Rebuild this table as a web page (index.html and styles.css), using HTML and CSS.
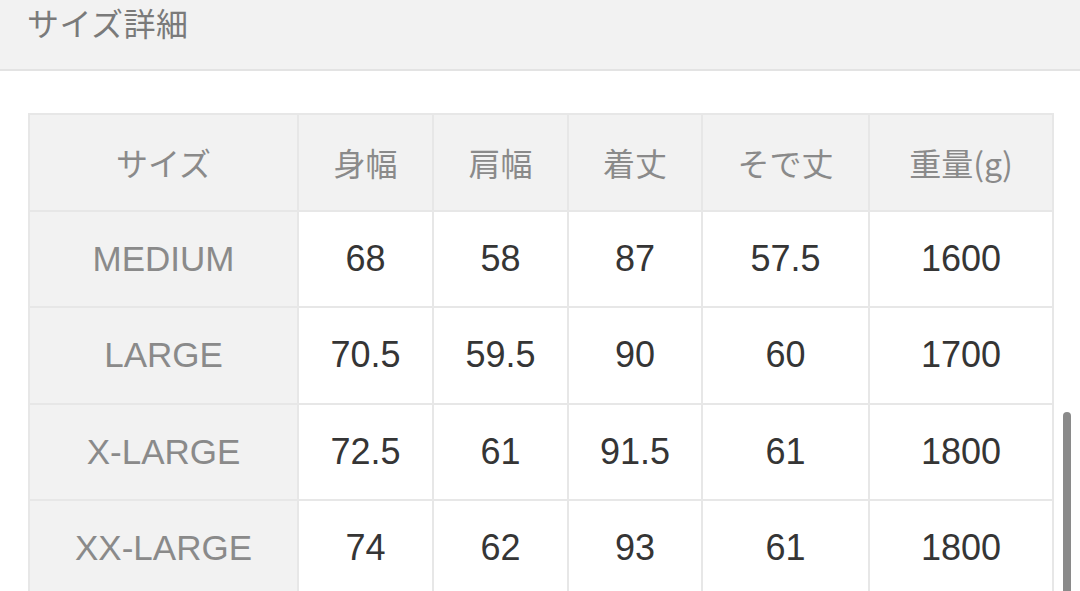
FILE: index.html
```html
<!DOCTYPE html>
<html lang="ja">
<head>
<meta charset="utf-8">
<link rel="stylesheet" href="styles.css">
</head>
<body>
<header class="bar"><h1 class="title">サイズ詳細</h1></header>
<main class="content">
<table class="size-table">
<colgroup>
<col class="c1"><col class="c2"><col class="c3"><col class="c4"><col class="c5"><col class="c6">
</colgroup>
<thead>
<tr><th>サイズ</th><th>身幅</th><th>肩幅</th><th>着丈</th><th>そで丈</th><th>重量(g)</th></tr>
</thead>
<tbody>
<tr><th>MEDIUM</th><td>68</td><td>58</td><td>87</td><td>57.5</td><td>1600</td></tr>
<tr><th>LARGE</th><td>70.5</td><td>59.5</td><td>90</td><td>60</td><td>1700</td></tr>
<tr><th>X-LARGE</th><td>72.5</td><td>61</td><td>91.5</td><td>61</td><td>1800</td></tr>
<tr><th>XX-LARGE</th><td>74</td><td>62</td><td>93</td><td>61</td><td>1800</td></tr>
</tbody>
</table>
</main>
<div class="scrollbar"></div>
</body>
</html>
```
FILE: styles.css
```css
html, body {
  margin: 0;
  padding: 0;
  background: #ffffff;
  height: 591px;
  overflow: hidden;
}
body {
  font-family: "Liberation Sans", "Noto Sans CJK JP", sans-serif;
  position: relative;
}
.bar {
  height: 69px;
  background: #f2f2f2;
  border-bottom: 2px solid #e3e3e3;
  display: flex;
  align-items: center;
  padding-left: 27px;
  box-sizing: content-box;
}
.title {
  margin: 0 0 26px 0;
  font-family: "Noto Sans CJK JP", sans-serif;
  font-weight: 400;
  font-size: 32px;
  color: #7a7a7a;
  letter-spacing: 0.5px;
}
.content {
  padding: 42px 0 0 28px;
}
.size-table {
  border-collapse: collapse;
  width: 1024px;
  table-layout: fixed;
}
.c1 { width: 269px; }
.c2 { width: 135px; }
.c3 { width: 135px; }
.c4 { width: 134px; }
.c5 { width: 167px; }
.c6 { width: 184px; }
.size-table th,
.size-table td {
  border: 2px solid #e7e7e7;
  height: 94.5px;
  padding: 0;
  text-align: center;
  vertical-align: middle;
  font-weight: 400;
}
.size-table thead th {
  background: #f2f2f2;
  color: #8a8a8a;
  font-family: "Noto Sans CJK JP", sans-serif;
  font-size: 32px;
}
.size-table tbody th {
  background: #f2f2f2;
  color: #8a8a8a;
  font-size: 35px;
}
.size-table td {
  background: #ffffff;
  color: #353535;
  font-size: 36px;
}
.scrollbar {
  position: absolute;
  left: 1063px;
  top: 412px;
  width: 8px;
  height: 200px;
  border-radius: 4px;
  background: #8a8a8a;
}
```
